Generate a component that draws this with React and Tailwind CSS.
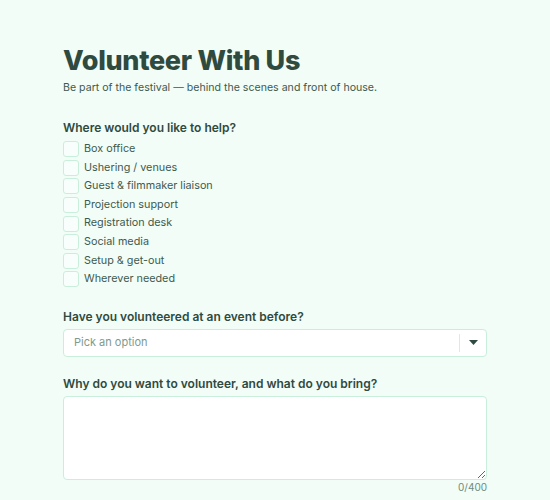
import { useState } from 'react'

const areas = [
  'Box office',
  'Ushering / venues',
  'Guest & filmmaker liaison',
  'Projection support',
  'Registration desk',
  'Social media',
  'Setup & get-out',
  'Wherever needed',
]

export default function App() {
  const [checked, setChecked] = useState({})
  const [why, setWhy] = useState('')

  return (
    <div
      className="min-h-[500px] bg-[#f2fdf7] text-[#2f4a3f]"
      style={{ fontFamily: 'Inter, "Noto Sans", sans-serif' }}
    >
      <div className="w-[424px] ml-[63px] pt-[44px]">
        <h1 className="text-[27px] leading-[34px] font-extrabold tracking-[-0.3px]">Volunteer With Us</h1>
        <p className="mt-[2px] text-[10.6px] leading-[16px] text-[#3e5a4e]">
          Be part of the festival — behind the scenes and front of house.
        </p>

        {/* Areas */}
        <div className="mt-[23px] text-[12px] leading-[18px] font-semibold">Where would you like to help?</div>
        <div className="mt-[3px] flex flex-col">
          {areas.map((a) => (
            <label key={a} className="flex items-center h-[18.57px] cursor-pointer">
              <input
                type="checkbox"
                className="sr-only"
                checked={!!checked[a]}
                onChange={() => setChecked({ ...checked, [a]: !checked[a] })}
              />
              <span
                className={`w-[16px] h-[16px] rounded-[3px] border border-[#c9eedc] ${
                  checked[a] ? 'bg-[#2f4a3f]' : 'bg-[#f8fefb]'
                }`}
              ></span>
              <span className="ml-[5px] text-[10.8px] text-[#3e5a4e]">{a}</span>
            </label>
          ))}
        </div>

        {/* Select */}
        <div className="mt-[19px] text-[12px] leading-[18px] font-semibold">Have you volunteered at an event before?</div>
        <div className="mt-[3px] h-[28px] flex items-center bg-white border border-[#c9eedc] rounded-[4px]">
          <span className="flex-1 pl-[10px] text-[11px] text-[#7f9a8d]">Pick an option</span>
          <span className="w-px h-[18px] bg-[#d6efe2]"></span>
          <span className="w-[26px] flex justify-center">
            <svg width="9" height="5" viewBox="0 0 9 5">
              <path d="M0 0h9L4.5 5z" fill="#2f4a3f" />
            </svg>
          </span>
        </div>

        {/* Textarea */}
        <div className="mt-[18px] text-[12px] leading-[18px] font-semibold">
          Why do you want to volunteer, and what do you bring?
        </div>
        <textarea
          value={why}
          maxLength={400}
          onChange={(e) => setWhy(e.target.value)}
          className="mt-[3px] block w-full h-[84px] bg-white border border-[#c9eedc] rounded-[4px] p-2 text-[12px] outline-none"
        />
        <div className="text-right text-[10px] leading-[12px] text-[#6f8a7e] mt-px">{why.length}/400</div>
      </div>
    </div>
  )
}
